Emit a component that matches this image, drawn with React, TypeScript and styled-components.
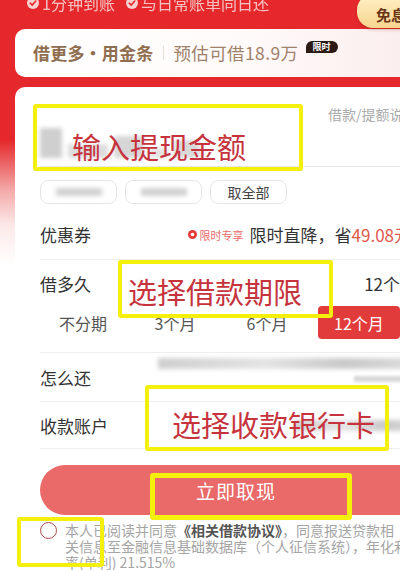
import React from 'react'
import styled, { createGlobalStyle } from 'styled-components'

const GlobalStyle = createGlobalStyle`
  html, body { margin: 0; padding: 0; background: #fff; }
  body { font-family: "Noto Sans CJK SC", "Noto Sans", sans-serif; }
`

const Page = styled.div`
  position: relative;
  width: 400px;
  height: 570px;
  overflow: hidden;
  display: flex;
  flex-direction: column;
  background: linear-gradient(to bottom, #e5282b 0, #e5282b 140px, #f4a9a9 190px, #fce8e8 225px, #fff 265px);
`

const TopBar = styled.div`
  height: 30px;
  display: flex;
  align-items: flex-start;
  gap: 11px;
  padding-left: 27px;
`

const Perk = styled.div`
  display: flex;
  align-items: center;
  gap: 3px;
  margin-top: -8px;
  font-size: 16px;
  line-height: 22px;
  color: rgba(255, 236, 236, 0.78);
  filter: blur(0.4px);
`

const CheckDot = styled.span`
  width: 12px;
  height: 12px;
  border-radius: 50%;
  background: rgba(255, 238, 238, 0.85);
  display: flex;
  align-items: center;
  justify-content: center;
`

const FreeBubble = styled.div`
  position: absolute;
  top: -6px;
  left: 357px;
  width: 60px;
  height: 34px;
  border-radius: 16px;
  background: linear-gradient(to bottom, #fff1c8, #f7d58e);
  box-shadow: 0 2px 3px rgba(120, 40, 0, 0.25);
  color: #6a3516;
  font-size: 15px;
  font-weight: 700;
  display: flex;
  align-items: center;
  padding-left: 19px;
  padding-top: 6px;
  box-sizing: border-box;
`

const Banner = styled.div`
  height: 50px;
  margin-left: 15px;
  border-radius: 10px 0 0 10px;
  background: linear-gradient(to right, #fff 0%, #fffafa 60%, #fbeeee 100%);
  display: flex;
  align-items: center;
  padding-left: 18px;
  color: #8f6d4f;
  font-size: 17px;
`

const BannerTitle = styled.span`
  font-weight: 700;
  letter-spacing: 0.2px;
`

const BannerSep = styled.span`
  width: 1px;
  height: 14px;
  background: #e8dcd4;
  margin: 0 9px 0 10px;
`

const BannerQuota = styled.span`
  color: #a0826a;
  font-size: 17.5px;
  letter-spacing: 0.4px;
`

const TimeBadge = styled.span`
  align-self: flex-start;
  margin-top: 12px;
  margin-left: 7px;
  padding: 0 7px;
  height: 12px;
  line-height: 12px;
  font-size: 9px;
  font-weight: 700;
  color: #fff;
  background: #2b1b14;
  border-radius: 6px 6px 6px 0;
`

const Card = styled.div`
  margin-top: 10px;
  margin-left: 15px;
  width: 419px;
  flex: 1;
  background: #fff;
  border-radius: 10px 0 0 0;
  padding: 0 10px 0 25px;
  box-sizing: border-box;
  display: flex;
  flex-direction: column;
`

const AmountArea = styled.div`
  height: 80px;
  display: flex;
  border-bottom: 1px solid #e8e8e8;
  box-sizing: border-box;
`

const AmountMosaic = styled.div`
  width: 288px;
  display: flex;
  align-items: flex-end;
  gap: 6px;
  padding-bottom: 8px;
  filter: blur(2px);
`

const Mosaic = styled.span<{ $w: number; $h: number; $tone: string }>`
  width: ${p => p.$w}px;
  height: ${p => p.$h}px;
  background: ${p => p.$tone};
`

const HelpLink = styled.span`
  margin-top: 17px;
  font-size: 14px;
  color: #aaa;
  white-space: nowrap;
`

const ChipRow = styled.div`
  margin-top: 13px;
  display: flex;
  gap: 8px;
`

const Chip = styled.div`
  width: 77px;
  height: 24px;
  border: 1px solid #e6e6e6;
  border-radius: 8px;
  box-sizing: border-box;
  display: flex;
  align-items: center;
  justify-content: center;
  font-size: 14px;
  color: #444;
`

const ChipBlur = styled.span`
  width: 46px;
  height: 8px;
  background: #d2d2d2;
  filter: blur(2px);
`

const Row = styled.div<{ $h: number; $line?: boolean; $top?: boolean }>`
  height: ${p => p.$h}px;
  display: flex;
  align-items: center;
  justify-content: space-between;
  border-bottom: ${p => (p.$line ? '1px solid #eeeeee' : 'none')};
  border-top: ${p => (p.$top ? '1px solid #eeeeee' : 'none')};
  box-sizing: border-box;
  white-space: nowrap;
`

const Label = styled.span`
  font-size: 17px;
  color: #333;
`

const Value = styled.span`
  display: flex;
  align-items: center;
  font-size: 17px;
  color: #333;
`

const Chevron = styled.span<{ $gap: number }>`
  margin-left: ${p => p.$gap}px;
  display: flex;
`

const CouponTag = styled.span`
  display: flex;
  align-items: center;
  gap: 3px;
  margin-right: 6px;
  font-size: 11px;
  color: #ec6a6a;
`

const Accent = styled.span`
  color: #e0574d;
`

const Terms = styled.div`
  height: 34px;
  margin-bottom: 12px;
  display: flex;
  gap: 10px;
  padding-left: 2px;
`

const Term = styled.div<{ $on?: boolean }>`
  width: 82px;
  height: 33px;
  border-radius: 4px;
  display: flex;
  align-items: center;
  justify-content: center;
  font-size: 16px;
  color: ${p => (p.$on ? '#fff' : '#555')};
  background: ${p => (p.$on ? '#e23b3b' : 'transparent')};
`

const BlurLine = styled.span<{ $w: number }>`
  width: ${p => p.$w}px;
  height: 11px;
  background: linear-gradient(to right, #cfcfcf, #e4e4e4 40%, #c9c9c9 70%, #e0e0e0);
  filter: blur(2px);
`

const RepayValue = styled.div`
  display: flex;
  flex-direction: column;
  align-items: flex-end;
  gap: 7px;
  margin-top: -14px;
`

const SmallBlur = styled.span`
  width: 70px;
  height: 6px;
  background: #d8d8d8;
  filter: blur(1.5px);
`

const Submit = styled.div`
  margin-top: 16px;
  height: 50px;
  border-radius: 25px 0 0 25px;
  background: #e96a68;
  display: flex;
  align-items: center;
  padding-left: 156px;
  font-size: 19px;
  letter-spacing: 1px;
  color: #fff;
`

const Agreement = styled.div`
  margin-top: 7px;
  display: flex;
  gap: 8px;
`

const Radio = styled.span`
  flex: none;
  width: 17px;
  height: 17px;
  border-radius: 50%;
  border: 1.5px solid #a84a4a;
  box-sizing: border-box;
`

const AgreeText = styled.div`
  font-size: 14px;
  line-height: 16px;
  color: #a5a5a5;
  white-space: nowrap;
`

const Strong = styled.span`
  color: #555;
  font-weight: 700;
`

const Note = styled.div<{ $x: number; $y: number; $w: number; $h: number; $pad: number; $dy?: number }>`
  position: absolute;
  left: ${p => p.$x}px;
  top: ${p => p.$y}px;
  width: ${p => p.$w}px;
  height: ${p => p.$h}px;
  border: 4px solid #f4ef0b;
  border-radius: 3px;
  box-sizing: border-box;
  display: flex;
  align-items: center;
  padding-left: ${p => p.$pad}px;
  padding-top: ${p => (p.$dy || 0) * 2}px;
  font-size: 29px;
  line-height: 34px;
  color: #c6333d;
  white-space: nowrap;
`

function Check() {
  return (
    <CheckDot>
      <svg width="8" height="8" viewBox="0 0 8 8">
        <path d="M1.2 4.2 L3.2 6 L6.8 2" fill="none" stroke="#e5282b" strokeWidth="1.6" strokeLinecap="round" />
      </svg>
    </CheckDot>
  )
}

function CouponIcon() {
  return (
    <svg width="9" height="9" viewBox="0 0 10 10">
      <circle cx="5" cy="5" r="5" fill="#e43b3b" />
      <circle cx="5" cy="5" r="2" fill="#fff" />
    </svg>
  )
}

function Arrow({ gap = 6 }: { gap?: number }) {
  return (
    <Chevron $gap={gap}>
      <svg width="7" height="12" viewBox="0 0 7 12">
        <path d="M1 1 L6 6 L1 11" fill="none" stroke="#bbb" strokeWidth="1.4" />
      </svg>
    </Chevron>
  )
}

export default function App() {
  const terms = ['不分期', '3个月', '6个月', '12个月']
  return (
    <>
      <GlobalStyle />
      <Page>
        <TopBar>
          <Perk><Check />1分钟到账</Perk>
          <Perk><Check />与日常账单同日还</Perk>
        </TopBar>
        <FreeBubble>免息</FreeBubble>

        <Banner>
          <BannerTitle>借更多·用金条</BannerTitle>
          <BannerSep />
          <BannerQuota>预估可借18.9万</BannerQuota>
          <TimeBadge>限时</TimeBadge>
        </Banner>

        <Card>
          <AmountArea>
            <AmountMosaic>
              <Mosaic $w={22} $h={30} $tone="#cfcfcf" />
              <Mosaic $w={40} $h={14} $tone="#dcdcdc" />
              <Mosaic $w={30} $h={22} $tone="#d6d6d6" />
              <Mosaic $w={18} $h={10} $tone="#e2e2e2" />
              <Mosaic $w={26} $h={18} $tone="#d9d9d9" />
            </AmountMosaic>
            <HelpLink>借款/提额说明</HelpLink>
          </AmountArea>

          <ChipRow>
            <Chip><ChipBlur /></Chip>
            <Chip><ChipBlur /></Chip>
            <Chip>取全部</Chip>
          </ChipRow>

          <Row $h={50} $line style={{ marginTop: 6 }}>
            <Label>优惠券</Label>
            <Value>
              <CouponTag><CouponIcon />限时专享</CouponTag>
              限时直降，省<Accent>49.08元</Accent>
              <Arrow />
            </Value>
          </Row>

          <Row $h={46}>
            <Label>借多久</Label>
            <Value>12个月<Arrow gap={0} /></Value>
          </Row>
          <Terms>
            {terms.map(t => (
              <Term key={t} $on={t === '12个月'}>{t}</Term>
            ))}
          </Terms>

          <Row $h={50} $line $top>
            <Label>怎么还</Label>
            <RepayValue>
              <BlurLine $w={266} />
              <SmallBlur />
            </RepayValue>
          </Row>

          <Row $h={47} $line>
            <Label>收款账户</Label>
            <BlurLine $w={130} />
          </Row>

          <Submit>立即取现</Submit>

          <Agreement>
            <Radio />
            <AgreeText>
              本人已阅读并同意<Strong>《相关借款协议》</Strong>，同意报送贷款相<br />
              关信息至金融信息基础数据库（个人征信系统），年化利<br />
              率(单利) 21.515%
            </AgreeText>
          </Agreement>
        </Card>

        <Note $x={33} $y={104} $w={270} $h={67} $pad={35} $dy={8}>输入提现金额</Note>
        <Note $x={118} $y={260} $w={215} $h={58} $pad={6} $dy={2}>选择借款期限</Note>
        <Note $x={145} $y={385} $w={244} $h={66} $pad={23} $dy={6}>选择收款银行卡</Note>
        <Note $x={150} $y={473} $w={202} $h={47} $pad={0} style={{ borderWidth: 5 }} />
        <Note $x={17} $y={517} $w={87} $h={50} $pad={0} />
      </Page>
    </>
  )
}
